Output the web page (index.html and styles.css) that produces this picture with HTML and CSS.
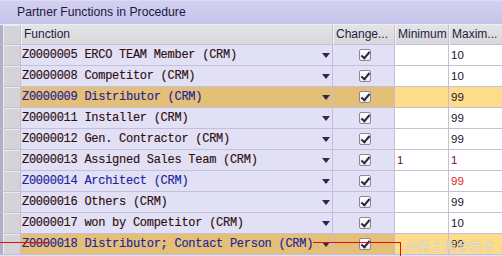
FILE: index.html
```html
<!DOCTYPE html>
<html>
<head>
    <title>Partner Functions in Procedure</title>
    <link rel="stylesheet" href="styles.css">
</head>
<body>

<div class="pf-panel">
    <div class="pf-title">Partner Functions in Procedure</div>

    <div class="pf-row pf-head">
        <div class="sel"></div>
        <div class="hd">Function</div>
        <div class="hd">Change...</div>
        <div class="hd">Minimum</div>
        <div class="hd">Maxim...</div>
    </div>

    <div class="pf-row">
        <div class="sel"></div>
        <div class="fn">Z0000005 ERCO TEAM Member (CRM)<span class="dd"></span></div>
        <div class="chk"><span class="box"></span></div>
        <div class="num"></div>
        <div class="num">10</div>
    </div>
    <div class="pf-row">
        <div class="sel"></div>
        <div class="fn">Z0000008 Competitor (CRM)<span class="dd"></span></div>
        <div class="chk"><span class="box"></span></div>
        <div class="num"></div>
        <div class="num">10</div>
    </div>
    <div class="pf-row picked">
        <div class="sel"></div>
        <div class="fn blue">Z0000009 Distributor (CRM)<span class="dd"></span></div>
        <div class="chk"><span class="box"></span></div>
        <div class="num"></div>
        <div class="num">99</div>
    </div>
    <div class="pf-row">
        <div class="sel"></div>
        <div class="fn">Z0000011 Installer (CRM)<span class="dd"></span></div>
        <div class="chk"><span class="box"></span></div>
        <div class="num"></div>
        <div class="num">99</div>
    </div>
    <div class="pf-row">
        <div class="sel"></div>
        <div class="fn">Z0000012 Gen. Contractor (CRM)<span class="dd"></span></div>
        <div class="chk"><span class="box"></span></div>
        <div class="num"></div>
        <div class="num">99</div>
    </div>
    <div class="pf-row">
        <div class="sel"></div>
        <div class="fn">Z0000013 Assigned Sales Team (CRM)<span class="dd"></span></div>
        <div class="chk"><span class="box"></span></div>
        <div class="num dark-red">1</div>
        <div class="num dark-red">1</div>
    </div>
    <div class="pf-row">
        <div class="sel"></div>
        <div class="fn blue">Z0000014 Architect (CRM)<span class="dd"></span></div>
        <div class="chk"><span class="box"></span></div>
        <div class="num"></div>
        <div class="num red">99</div>
    </div>
    <div class="pf-row">
        <div class="sel"></div>
        <div class="fn">Z0000016 Others (CRM)<span class="dd"></span></div>
        <div class="chk"><span class="box"></span></div>
        <div class="num"></div>
        <div class="num">99</div>
    </div>
    <div class="pf-row">
        <div class="sel"></div>
        <div class="fn">Z0000017 won by Competitor (CRM)<span class="dd"></span></div>
        <div class="chk"><span class="box"></span></div>
        <div class="num"></div>
        <div class="num">10</div>
    </div>
    <div class="pf-row picked">
        <div class="sel"></div>
        <div class="fn blue">Z0000018 Distributor; Contact Person (CRM)<span class="dd"></span></div>
        <div class="chk"><span class="box"></span></div>
        <div class="num"></div>
        <div class="num">99</div>
    </div>

    <!-- red annotation drawn over the screenshot -->
    <div class="mark mark-left"></div>
    <div class="mark mark-right"></div>
    <div class="mark mark-down"></div>
    <div class="watermark">@稀土掘金技术社区</div>
</div>

</body>
</html>
```

FILE: styles.css
```css
body {
    margin: 0;
    background: #ffffff;
    font-family: "Liberation Sans", Arial, sans-serif;
}

.pf-panel {
    position: relative;
    width: 502px;
    height: 256px;
    overflow: hidden;
    background: #e2e0f4;
}

.pf-title {
    box-sizing: border-box;
    height: 25px;
    line-height: 23px;
    padding-left: 17px;
    font-size: 12.2px;
    color: #1c1a3c;
    background: linear-gradient(#d2d0f1, #c6c3ea);
    border-top: 1px solid #dcdaf5;
    border-bottom: 1px solid #ecebf8;
}

.pf-row {
    display: grid;
    grid-template-columns: 21px 312px 62px 54px 60px;
    height: 21px;
}

.pf-row > div {
    box-sizing: border-box;
    border-right: 1px solid #c4c0da;
    border-bottom: 1px solid #c4c0da;
    white-space: nowrap;
    overflow: hidden;
}

.pf-head {
    height: 20px;
}

.pf-head .hd {
    background: linear-gradient(#e4e4e6, #d8d8dc);
    border-left: 1px solid #f2f2f4;
    font-size: 12px;
    line-height: 19px;
    padding-left: 2px;
    color: #1e1c40;
}

.sel {
    border-left: 3px solid #b0aec8;
    background: #d3d3d8;
    box-shadow: inset 1px 1px 0 #ececf0;
}

.fn {
    position: relative;
    font-family: "Liberation Mono", "Courier New", monospace;
    font-size: 12px;
    letter-spacing: -0.27px;
    line-height: 20px;
    padding-left: 1px;
    color: #2e1010;
    -webkit-text-stroke: 0.15px currentColor;
}

.fn.blue {
    color: #23239e;
}

.dd {
    position: absolute;
    right: 2px;
    top: 8px;
    width: 0;
    height: 0;
    border-left: 4.5px solid transparent;
    border-right: 4.5px solid transparent;
    border-top: 5px solid #2e2558;
}

.chk {
    display: flex;
    align-items: center;
    justify-content: center;
}

.box {
    position: relative;
    width: 12px;
    height: 12px;
    box-sizing: border-box;
    border: 1px solid #8a8898;
    border-radius: 2px;
    background: linear-gradient(#ffffff, #ececf2);
    margin-left: 3px;
}

.box::after {
    content: "";
    position: absolute;
    left: 3px;
    top: 0px;
    width: 3px;
    height: 7px;
    border-right: 2px solid #2a2838;
    border-bottom: 2px solid #2a2838;
    transform: rotate(40deg);
}

.num {
    background: #ffffff;
    font-size: 11.5px;
    line-height: 20px;
    padding-left: 2px;
    color: #1e1030;
}

.num.dark-red {
    color: #7a0a2a;
}

.num.red {
    color: #d81818;
}

.picked .fn,
.picked .chk {
    background: #e3bf78;
}

.picked .num {
    background: #fddd8a;
}

.mark {
    position: absolute;
    background: #e01010;
}

.mark-left {
    left: 0;
    top: 242px;
    width: 50px;
    height: 1px;
}

.mark-right {
    left: 313px;
    top: 242px;
    width: 88px;
    height: 1px;
}

.mark-down {
    left: 400px;
    top: 242px;
    width: 1px;
    height: 14px;
}

.watermark {
    position: absolute;
    left: 405px;
    top: 236px;
    font-family: "Noto Sans CJK SC", sans-serif;
    font-size: 13px;
    color: rgba(255, 255, 255, 0.7);
    text-shadow: 0 0 1px rgba(90, 80, 60, 0.45);
}
```
